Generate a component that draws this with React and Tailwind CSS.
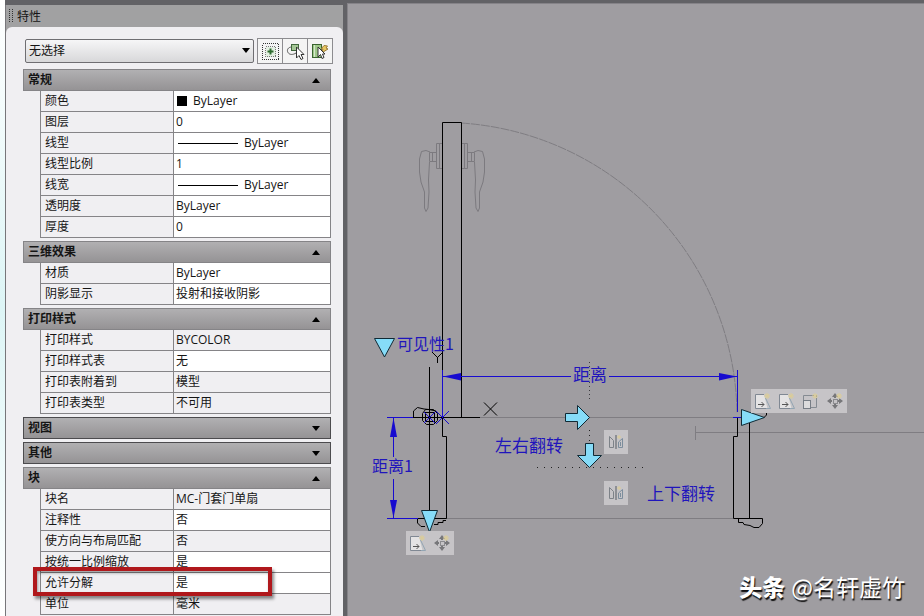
import { useState } from "react";

const SECTIONS = [
  {
    title: "常规",
    open: true,
    rows: [
      { label: "颜色", value: "ByLayer", swatch: true },
      { label: "图层", value: "0" },
      { label: "线型", value: "ByLayer", line: true },
      { label: "线型比例", value: "1" },
      { label: "线宽", value: "ByLayer", line: true },
      { label: "透明度", value: "ByLayer" },
      { label: "厚度", value: "0" },
    ],
  },
  {
    title: "三维效果",
    open: true,
    rows: [
      { label: "材质", value: "ByLayer" },
      { label: "阴影显示", value: "投射和接收阴影" },
    ],
  },
  {
    title: "打印样式",
    open: true,
    rows: [
      { label: "打印样式", value: "BYCOLOR", readOnly: true },
      { label: "打印样式表", value: "无" },
      { label: "打印表附着到", value: "模型", readOnly: true },
      { label: "打印表类型", value: "不可用", readOnly: true },
    ],
  },
  { title: "视图", open: false, rows: [] },
  { title: "其他", open: false, rows: [] },
  {
    title: "块",
    open: true,
    rows: [
      { label: "块名", value: "MC-门套门单扇", readOnly: true },
      { label: "注释性", value: "否" },
      { label: "使方向与布局匹配", value: "否", readOnly: true },
      { label: "按统一比例缩放", value: "是" },
      { label: "允许分解", value: "是", marked: true },
      { label: "单位", value: "毫米", readOnly: true },
    ],
  },
];

function Triangle({ up }) {
  return (
    <svg width="8" height="5" viewBox="0 0 8 5" aria-hidden="true">
      <path d={up ? "M0 5L4 0L8 5Z" : "M0 0L4 5L8 0Z"} fill="#000" />
    </svg>
  );
}

function PickAddIcon() {
  return (
    <svg width="24" height="24" viewBox="0 0 24 24" fill="none" aria-hidden="true">
      <rect x="4.5" y="4.5" width="16" height="16" stroke="#333" strokeDasharray="1 1" shapeRendering="crispEdges" />
      <rect x="7.5" y="7.5" width="10" height="10" fill="#e3efe1" stroke="#777" strokeDasharray="1 1" shapeRendering="crispEdges" />
      <path d="M12.5 9.5V15.5M9.5 12.5H15.5" stroke="#2e6b2e" strokeWidth="2" />
    </svg>
  );
}

function SelectObjectsIcon() {
  return (
    <svg width="24" height="24" viewBox="0 0 24 24" fill="none" aria-hidden="true">
      <path d="M9 8C5 8 3.5 11 5 13.5C6.5 16 10 16 13 14" stroke="#555" />
      <rect x="8.5" y="5.5" width="7" height="6" fill="#a4c795" stroke="#40663c" />
      <path d="M13.5 8V19L16 16.5L18 20.5L20 19.5L18 15.5H21Z" fill="#fff" stroke="#333" />
    </svg>
  );
}

function QuickSelectIcon() {
  return (
    <svg width="24" height="24" viewBox="0 0 24 24" fill="none" aria-hidden="true">
      <rect x="4.5" y="5.5" width="9" height="13" fill="#9fc98a" stroke="#39632f" />
      <path d="M6.5 6V18" stroke="#d5e8cc" />
      <path d="M16 6.5L19.5 7L18 9L20 10L13.5 14L15 10L13 10Z" fill="#e9c862" stroke="#997b38" />
      <path d="M10 8V18L12.5 15.5L14 19.5L16 18.5L14.5 15H17Z" fill="#fff" stroke="#333" />
    </svg>
  );
}

const TOOLS = [
  { name: "切换 PICKADD", Icon: PickAddIcon },
  { name: "选择对象", Icon: SelectObjectsIcon },
  { name: "快速选择", Icon: QuickSelectIcon },
];

function PropertyRow({ row }) {
  return (
    <tr className="h-[21px]">
      <th
        scope="row"
        className="relative w-[133px] border-b border-l border-[#858487] pl-1 text-left font-normal"
      >
        {row.label}
        {row.marked && (
          <span className="pointer-events-none absolute -top-1.5 -left-2 z-10 h-[29px] w-[239px] border-4 border-[#b0181c] shadow-[2px_3px_3px_rgba(0,0,0,0.45),inset_1px_2px_3px_rgba(0,0,0,0.35)]" />
        )}
      </th>
      <td className={`border-x border-b border-[#858487] pl-0.5 ${row.readOnly ? "" : "bg-white"}`}>
        <div className="flex items-center">
          {row.swatch && <span className="mr-1.5 ml-px h-2.5 w-2.5 bg-black" />}
          {row.line && <span className="mr-1.5 ml-0.5 h-px w-[60px] bg-black" />}
          {row.value}
        </div>
      </td>
    </tr>
  );
}

function Section({ section }) {
  const [open, setOpen] = useState(section.open);
  return (
    <section>
      <button
        type="button"
        aria-expanded={open}
        onClick={() => setOpen(!open)}
        className={`flex h-[22px] w-full items-center justify-between border bg-linear-to-b from-[#b1b0b2] to-[#959395] pr-2.5 pl-1 text-left font-bold ${
          open ? "border-[#858487]" : "border-[#4c4b4e]"
        }`}
      >
        {section.title}
        <Triangle up={open} />
      </button>
      {open && (
        <div className="pl-[17px]">
          <table className="w-full table-fixed border-separate border-spacing-0">
            <tbody>
              {section.rows.map((row) => (
                <PropertyRow key={row.label} row={row} />
              ))}
            </tbody>
          </table>
        </div>
      )}
    </section>
  );
}

function PropertiesPanel() {
  return (
    <aside className="flex w-[338px] shrink-0 flex-col border-l border-[#77767a] bg-[#a1a1a2]">
      <header className="flex h-[22px] items-center gap-1 rounded-t-md pt-0.5 pl-[3px]">
        <svg width="4" height="13" viewBox="0 0 4 13" aria-hidden="true" className="mb-1">
          <path d="M0.5 0V13M3.5 0V13" stroke="#333" strokeDasharray="1 1" />
        </svg>
        <h1>特性</h1>
      </header>
      <div className="flex-1 rounded-t-md bg-[#f0eff2] pt-[11px] pr-2.5 pl-[17px]">
        <div className="mb-1.5 flex h-[25px] items-center gap-[3px] pl-0.5">
          <div className="relative flex-1">
            <select
              aria-label="选择"
              className="h-6 w-full appearance-none rounded-xs border border-[#6f6e72] bg-linear-to-b from-[#f6f6f7] to-[#d8d8da] pl-[3px] outline-none"
            >
              <option>无选择</option>
            </select>
            <span className="pointer-events-none absolute inset-y-0 right-1 flex items-center">
              <Triangle />
            </span>
          </div>
          <div className="flex border border-[#8d8c90]">
            {TOOLS.map(({ name, Icon }) => (
              <button
                key={name}
                type="button"
                aria-label={name}
                className="h-6 w-[25px] border-r border-[#8d8c90] bg-[#f4f4f4] last:w-6 last:border-r-0"
              >
                <Icon />
              </button>
            ))}
          </div>
        </div>
        <div className="flex flex-col gap-[3px] pr-0.5">
          {SECTIONS.map((section) => (
            <Section key={section.title} section={section} />
          ))}
        </div>
      </div>
    </aside>
  );
}

// Lever and rose on one side of the leaf, the other side is mirrored.
function Handle() {
  return (
    <g stroke="#7c7a7f" fill="none">
      <path d="M442 143.5H436.5V168.5H442M439.5 143V168M436 152.5H429.5V161.5H436M432.5 152V161" />
      <path d="M430 152L426 150.5L421.5 151.5L419.5 159L419.5 172L421 182L424.5 192L424.5 208L426 211.5L428 208L429 192L428.5 180L429.5 162" />
    </g>
  );
}

function DoorDrawing() {
  return (
    <svg className="block h-full w-full" role="img" aria-label="单扇门平面图">
      <g transform="translate(-348 -4)" fill="none">
        <g stroke="#7f7d82">
          <path d="M461 123A295 295 0 0 1 737 413" strokeDasharray="9 1" />
          <path d="M480 417.5H737M446 518.5H733" />
          <path d="M695 432.5H2400M695.5 426V440" />
          <path d="M751 413C756 407 766 408 766 413" />
        </g>
        <Handle />
        <g transform="translate(904 0) scale(-1 1)">
          <Handle />
        </g>

        {/* flip axes */}
        <path d="M589.5 362V402" stroke="#3c3b40" strokeDasharray="1 3" />
        <path d="M589.5 430V444" stroke="#222" strokeDasharray="1 4" />
        <path d="M537 467.5H645" stroke="#222" strokeDasharray="1 6" />

        {/* leaf and frame */}
        <g stroke="#000">
          <path d="M442.5 436V122.5H461.5V417.5" />
          <path d="M413 417.5H480M442.5 417V436.5H446.5V518.5H417.5V523L421 526.5H425M434 524.5H438V522.5H443V520.5H446" />
          <path d="M429.5 367V511" />
          <path d="M737.5 417V436.5H733.5V518.5H762.5V523.5L759 527.5H754L750 525.5L744 524.5L743 522.5H738.5V518.5M749.5 423V518" />
          <path d="M764 417.5L766.5 415V411" />
          <path d="M413.5 417V411L417.5 407.5L424 409L429 409.5L436 411" />
          <path d="M425.5 409.5H433.5L437.5 413.5V420.5L433.5 424.5H426.5L422.5 420.5V413.5Z" />
          <rect x="425.5" y="412.5" width="9" height="9" />
          <path d="M484 402.5L497 415.5M497 402.5L484 415.5" />
          <path d="M432 352L437.5 357.5L443 352M437.5 357V363" />
        </g>

        {/* dimensions */}
        <g stroke="#170bd0">
          <path d="M443 376.5H571M609 376.5H737" />
          <path d="M442.5 370V417M737.5 370V412M733 417.5H741" />
          <path d="M393.5 418V457M393.5 479V518" />
          <path d="M387 417.5H413M387 518.5H418" />
          <path d="M436 411L449 424M449 411L436 424" />
          <path d="M424 412L435 423M435 412L424 423" />
        </g>
        <g fill="#170bd0">
          <path d="M443 376.5L461 373V380.5Z" />
          <path d="M737 376.5L719 373V380.5Z" />
          <path d="M393.5 418L390 437H397Z" />
          <path d="M393.5 518L390 500H397Z" />
        </g>
        <g fill="#1f15bc" fontFamily="'Noto Sans CJK SC', sans-serif">
          <text x="397" y="350" fontSize="16">可见性1</text>
          <text x="573" y="381" fontSize="17">距离</text>
          <text x="372" y="472" fontSize="16">距离1</text>
          <text x="495" y="452" fontSize="17">左右翻转</text>
          <text x="647" y="500" fontSize="17">上下翻转</text>
        </g>

        {/* grips */}
        <g fill="#86dcf8" stroke="#102a35">
          <path d="M374.5 338.5H394.5L384.5 357Z" />
          <path d="M421.5 510.5H437.5L429.5 532Z" />
          <path d="M741.5 409.5L764.5 417.5L741.5 425.5Z" />
          <path d="M565.5 413.5H577.5V405.5L589.5 417.5L577.5 429.5V421.5H565.5Z" />
          <path d="M585.5 443.5H593.5V455.5H601.5L589.5 467.5L577.5 455.5H585.5Z" />
        </g>
      </g>
    </svg>
  );
}

function Spark() {
  return <path d="M16 4V10M13 7H19M14 5L18 9M18 5L14 9" stroke="#dccd96" />;
}

function StretchIcon() {
  return (
    <>
      <path d="M13 5.5H4.5V19.5H16.5" stroke="#808893" fill="#e4e3e4" />
      <path d="M14.5 9L19.5 19.5H15" stroke="#92a5b3" />
      <path d="M7 15.5H13M10.5 13L13 15.5L10.5 18" stroke="#555" />
      <Spark />
    </>
  );
}

function ScaleIcon() {
  return (
    <>
      <path d="M4.5 11V6.5H17.5V18.5H12" stroke="#858b92" />
      <rect x="4.5" y="11.5" width="7" height="8" stroke="#777d85" fill="#dddcdd" />
      <Spark />
    </>
  );
}

function MoveIcon() {
  return (
    <>
      <path
        d="M12 4L15 8H9ZM12 20L15 16H9ZM4 12L8 9V15ZM20 12L16 9V15Z"
        fill="#77777a"
      />
      <path d="M12 7V9M12 15V17M7 12H9M15 12H17" stroke="#77777a" strokeWidth="2" />
      <rect x="10.5" y="10.5" width="4" height="4" stroke="#8b8b8e" />
      <Spark />
    </>
  );
}

function FlipIcon() {
  return (
    <>
      <path d="M5.5 17.5V6.5L9.5 10.5V17.5Z" stroke="#7d8288" />
      <path d="M12 5V19" stroke="#555b62" />
      <path d="M14.5 17.5V12L18.5 8.5V17.5ZM16.5 12V16" stroke="#7c8d9c" />
      <path d="M15 5V9M13 7H17" stroke="#dccd96" />
    </>
  );
}

function GripBar({ className, items }) {
  return (
    <div className={`absolute flex bg-[#c6c4c7] ${className}`}>
      {items.map(([name, Icon], i) => (
        <button key={i} type="button" aria-label={name} className="h-6 w-6">
          <svg width="24" height="24" viewBox="0 0 24 24" fill="none" aria-hidden="true">
            <Icon />
          </svg>
        </button>
      ))}
    </div>
  );
}

export default function App() {
  return (
    <div className="flex h-screen min-h-[616px] overflow-hidden bg-[#626266] font-['Open_Sans','Noto_Sans_CJK_SC',sans-serif] text-xs leading-4 text-[#151515]">
      <div className="w-[5px] shrink-0 bg-[#f4fbfb] bg-linear-to-b from-white via-[#ddf5f6] to-white" />
      <div className="flex pt-[5px]">
        <PropertiesPanel />
      </div>
      <main className="relative mt-[3px] ml-1 flex-1 overflow-hidden border-t border-l border-[#858388] bg-[#9f9da1]">
        <div className="absolute inset-0">
          <DoorDrawing />
        </div>
        <GripBar
          className="top-[385px] left-[403px]"
          items={[
            ["拉伸", StretchIcon],
            ["拉长", StretchIcon],
            ["缩放", ScaleIcon],
            ["移动", MoveIcon],
          ]}
        />
        <GripBar
          className="top-[527px] left-[58px]"
          items={[
            ["拉伸", StretchIcon],
            ["移动", MoveIcon],
          ]}
        />
        <GripBar className="top-[426px] left-[256px]" items={[["左右翻转", FlipIcon]]} />
        <GripBar className="top-[477px] left-[256px]" items={[["上下翻转", FlipIcon]]} />
        <p className="absolute right-[19px] bottom-3.5 flex items-center gap-1.5 font-['Noto_Sans_CJK_SC',sans-serif] text-[23px] leading-8 text-white [text-shadow:1px_2px_1px_#111]">
          <span className="font-black">头条</span>
          <span>@名轩虚竹</span>
        </p>
      </main>
    </div>
  );
}
